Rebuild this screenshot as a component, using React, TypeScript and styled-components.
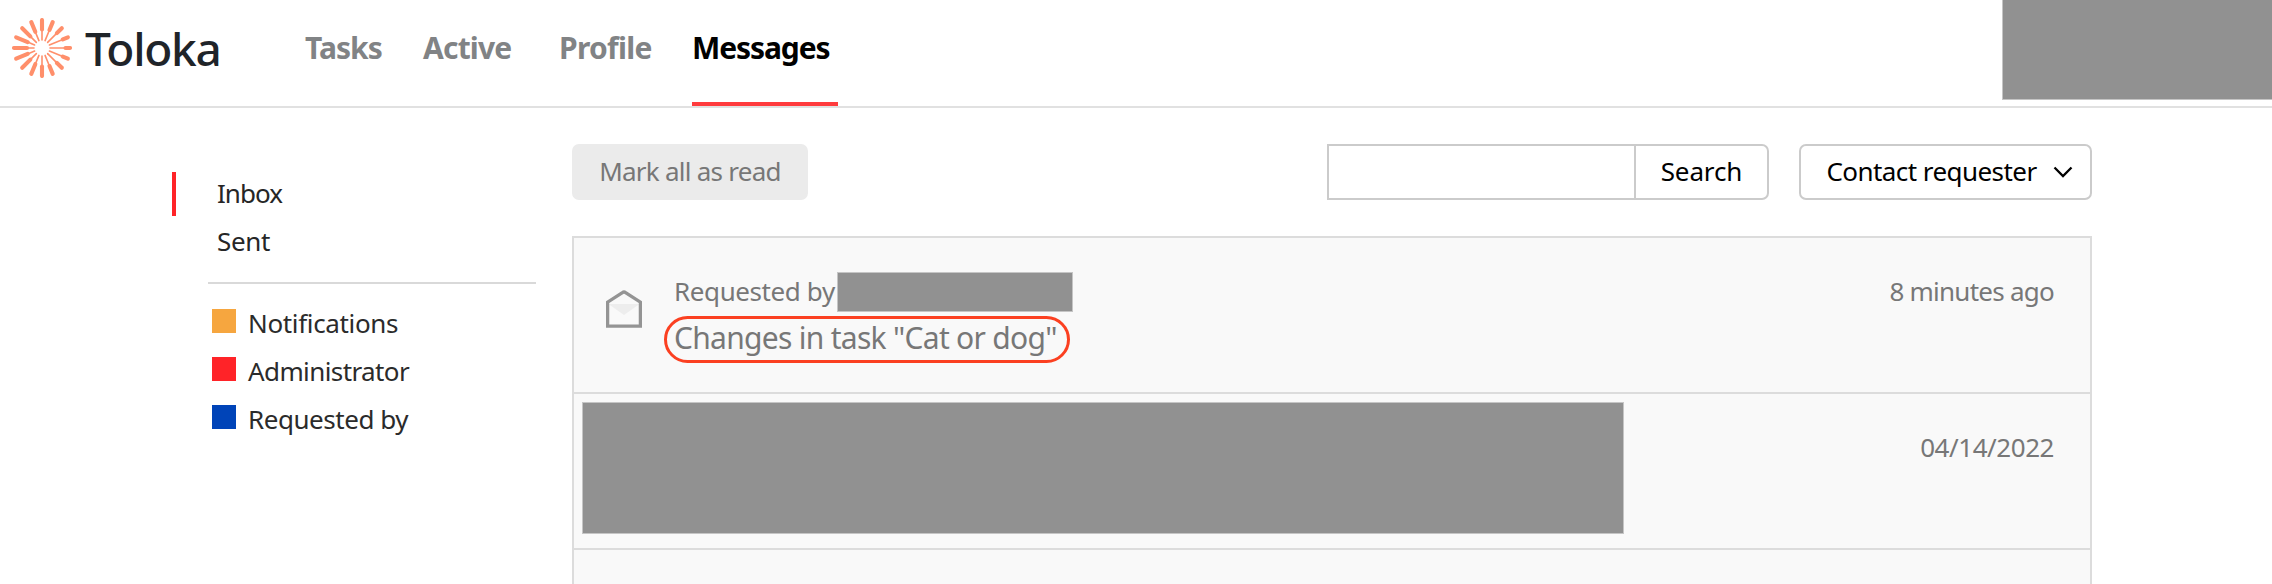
import React from "react";
import styled, { createGlobalStyle } from "styled-components";

const GlobalStyle = createGlobalStyle`
  * { box-sizing: border-box; }
  body {
    margin: 0;
    background: #fff;
    font-family: "Noto Sans", "Open Sans", sans-serif;
    font-size: 26px;
    overflow: hidden;
  }
`;

const Page = styled.div`
  width: 2272px;
  height: 584px;
  overflow: hidden;
  display: flex;
  flex-direction: column;
`;

const Header = styled.header`
  height: 108px;
  flex: none;
  display: flex;
  align-items: flex-start;
  border-bottom: 2px solid #e1e1e1;
`;

const Brand = styled.a`
  display: flex;
  align-items: center;
  height: 96px;
  padding-left: 12px;
  width: 305px;
`;

const LogoMark = styled.svg`
  flex: none;
  width: 60px;
  height: 60px;
`;

const BrandName = styled.span`
  margin-left: 13px;
  font-size: 46px;
  line-height: 60px;
  font-weight: 500;
  letter-spacing: -1.3px;
  color: #1f2429;
`;

const Nav = styled.nav`
  display: flex;
  height: 106px;
  flex: 1;
`;

const NavItem = styled.a<{ $active?: boolean; $width: number; $tracking: number }>`
  width: ${(p) => p.$width}px;
  height: 106px;
  font-size: 30px;
  line-height: 96px;
  font-weight: 700;
  white-space: nowrap;
  letter-spacing: ${(p) => p.$tracking}px;
  color: ${(p) => (p.$active ? "#000" : "#818385")};
  border-bottom: 4px solid ${(p) => (p.$active ? "#ff3b3d" : "transparent")};
`;

const Redacted = styled.span<{ $w: number; $h: number }>`
  flex: none;
  display: block;
  width: ${(p) => p.$w}px;
  height: ${(p) => p.$h}px;
  background: #919191;
  border: 1px solid #c5c5c5;
`;

const AccountRedacted = styled(Redacted)`
  border-width: 0 0 1px 1px;
`;

const Body = styled.main`
  flex: 1;
  min-height: 0;
  display: flex;
`;

const Sidebar = styled.aside`
  width: 572px;
  flex: none;
  padding: 64px 36px 0 172px;
`;

const Folder = styled.a<{ $active?: boolean; $tracking: number }>`
  display: flex;
  height: 44px;
  margin-bottom: 4px;
  padding-left: 41px;
  line-height: 42px;
  color: #262626;
  letter-spacing: ${(p) => p.$tracking}px;
  border-left: 4px solid ${(p) => (p.$active ? "#ff2328" : "transparent")};
`;

const Divider = styled.hr`
  margin: 18px 0 15px 36px;
  border: 0;
  height: 2px;
  background: #d9d9d9;
`;

const Category = styled.a<{ $tracking: number }>`
  display: flex;
  align-items: center;
  height: 48px;
  padding-left: 40px;
  line-height: 48px;
  color: #2b2b2b;
  letter-spacing: ${(p) => p.$tracking}px;
`;

const Swatch = styled.span<{ $color: string }>`
  width: 24px;
  height: 24px;
  margin: 0 12px 4px 0;
  background: ${(p) => p.$color};
`;

const Content = styled.section`
  width: 1520px;
  padding-top: 36px;
  display: flex;
  flex-direction: column;
`;

const Toolbar = styled.div`
  display: flex;
  height: 56px;
  margin-bottom: 36px;
`;

const Button = styled.button<{ $width: number; $tracking: number }>`
  display: flex;
  align-items: center;
  justify-content: center;
  width: ${(p) => p.$width}px;
  height: 56px;
  padding: 0 0 2px;
  border: 2px solid #cbcbcb;
  border-radius: 7px;
  background: #fff;
  color: #000;
  font: inherit;
  white-space: nowrap;
  letter-spacing: ${(p) => p.$tracking}px;
`;

const MarkButton = styled(Button)`
  margin-right: auto;
  border-color: #ebebeb;
  background: #ebebeb;
  color: #777;
`;

const SearchInput = styled.input`
  width: 307px;
  height: 56px;
  border: 2px solid #cbcbcb;
  border-right: 0;
  border-radius: 0;
  outline: 0;
  background: #fff;
`;

const SearchButton = styled(Button)`
  border-radius: 0 7px 7px 0;
  margin-right: 30px;
`;

const MenuButton = styled(Button)`
  padding-left: 8px;
`;

const Chevron = styled.svg`
  width: 20px;
  height: 14px;
  margin: 1px 0 0 16px;
`;

const List = styled.div`
  flex: 1;
  min-height: 0;
  border: 2px solid #dcdcdc;
  border-bottom: 0;
  background: #f9f9f9;
`;

const Row = styled.article`
  height: 156px;
  display: flex;
  align-items: flex-start;
  border-bottom: 2px solid #dcdcdc;
  color: #777;
`;

const Envelope = styled.svg`
  flex: none;
  width: 36px;
  height: 38px;
  margin: 52px 22px 0 32px;
`;

const Summary = styled.div`
  padding-top: 34px;
`;

const Sender = styled.div`
  display: flex;
  height: 40px;
  padding-left: 10px;
  line-height: 39px;
  letter-spacing: -0.4px;
`;

const SenderName = styled.span`
  width: 163px;
`;

const Subject = styled.div`
  display: flex;
  width: 406px;
  height: 47px;
  margin-top: 4px;
  padding-left: 7px;
  border: 3px solid #fb4021;
  border-radius: 24px;
  font-size: 30px;
  line-height: 38px;
  white-space: nowrap;
  letter-spacing: -0.71px;
`;

const HiddenMessage = styled(Redacted)`
  margin: 8px 0 0 8px;
`;

const When = styled.time<{ $tracking: number }>`
  margin-left: auto;
  padding: 34px 36px 0 0;
  line-height: 39px;
  letter-spacing: ${(p) => p.$tracking}px;
`;

const petals = Array.from({ length: 16 }, (_, i) => {
  const step = i > 8 ? 16 - i : i;
  const start = [21.5, 20.5, 19, 17.5, 16.5, 15.5, 14.5, 13.5, 13][step];
  return { angle: i * 22.5, start: start + 2 };
});

function Logo() {
  return (
    <LogoMark viewBox="-30 -30 60 60" stroke="#ff8f6b" strokeLinecap="round">
      {petals.map(({ angle, start }) => (
        <g key={angle} transform={`rotate(${angle})`}>
          <line x1="8" y1="0" x2={start} y2="0" strokeWidth="1.6" />
          <line x1={start} y1="0" x2="28" y2="0" strokeWidth="4.1" />
        </g>
      ))}
    </LogoMark>
  );
}

const nav = [
  { label: "Tasks", width: 118, tracking: -0.95 },
  { label: "Active", width: 136, tracking: -0.8 },
  { label: "Profile", width: 133, tracking: -0.7 },
  { label: "Messages", width: 146, tracking: -1.1, active: true },
];

const categories = [
  { label: "Notifications", color: "#f6a63f", tracking: -0.35 },
  { label: "Administrator", color: "#ff2328", tracking: -0.6 },
  { label: "Requested by", color: "#0044b8", tracking: -0.45 },
];

export default function App() {
  return (
    <Page>
      <GlobalStyle />
      <Header>
        <Brand>
          <Logo />
          <BrandName>Toloka</BrandName>
        </Brand>
        <Nav>
          {nav.map((n) => (
            <NavItem key={n.label} $active={n.active} $width={n.width} $tracking={n.tracking}>
              {n.label}
            </NavItem>
          ))}
        </Nav>
        <AccountRedacted $w={270} $h={100} />
      </Header>
      <Body>
        <Sidebar>
          <Folder $active $tracking={-0.95}>Inbox</Folder>
          <Folder $tracking={-0.3}>Sent</Folder>
          <Divider />
          {categories.map((c) => (
            <Category key={c.label} $tracking={c.tracking}>
              <Swatch $color={c.color} />
              {c.label}
            </Category>
          ))}
        </Sidebar>
        <Content>
          <Toolbar>
            <MarkButton $width={236} $tracking={-0.75}>Mark all as read</MarkButton>
            <SearchInput aria-label="Search messages" />
            <SearchButton $width={135} $tracking={-0.1}>Search</SearchButton>
            <MenuButton $width={293} $tracking={-0.56}>
              Contact requester
              <Chevron viewBox="0 0 20 14" fill="none" stroke="#000" strokeWidth="2.3">
                <path d="M1.5 2.5 L10 11 L18.5 2.5" />
              </Chevron>
            </MenuButton>
          </Toolbar>
          <List>
            <Row>
              <Envelope viewBox="0 0 36 38">
                <path d="M2.5 14 H33.5 L18 25 Z" fill="#ededed" />
                <path
                  d="M1.6 36.2 V12.2 L16.4 2.6 Q18 1.4 19.6 2.6 L34.4 12.2 V36.2 Z"
                  fill="none"
                  stroke="#949494"
                  strokeWidth="3.3"
                />
              </Envelope>
              <Summary>
                <Sender>
                  <SenderName>Requested by</SenderName>
                  <Redacted $w={236} $h={40} />
                </Sender>
                <Subject>Changes in task "Cat or dog"</Subject>
              </Summary>
              <When $tracking={-0.75}>8 minutes ago</When>
            </Row>
            <Row>
              <HiddenMessage $w={1042} $h={132} />
              <When $tracking={-0.45}>04/14/2022</When>
            </Row>
          </List>
        </Content>
      </Body>
    </Page>
  );
}
